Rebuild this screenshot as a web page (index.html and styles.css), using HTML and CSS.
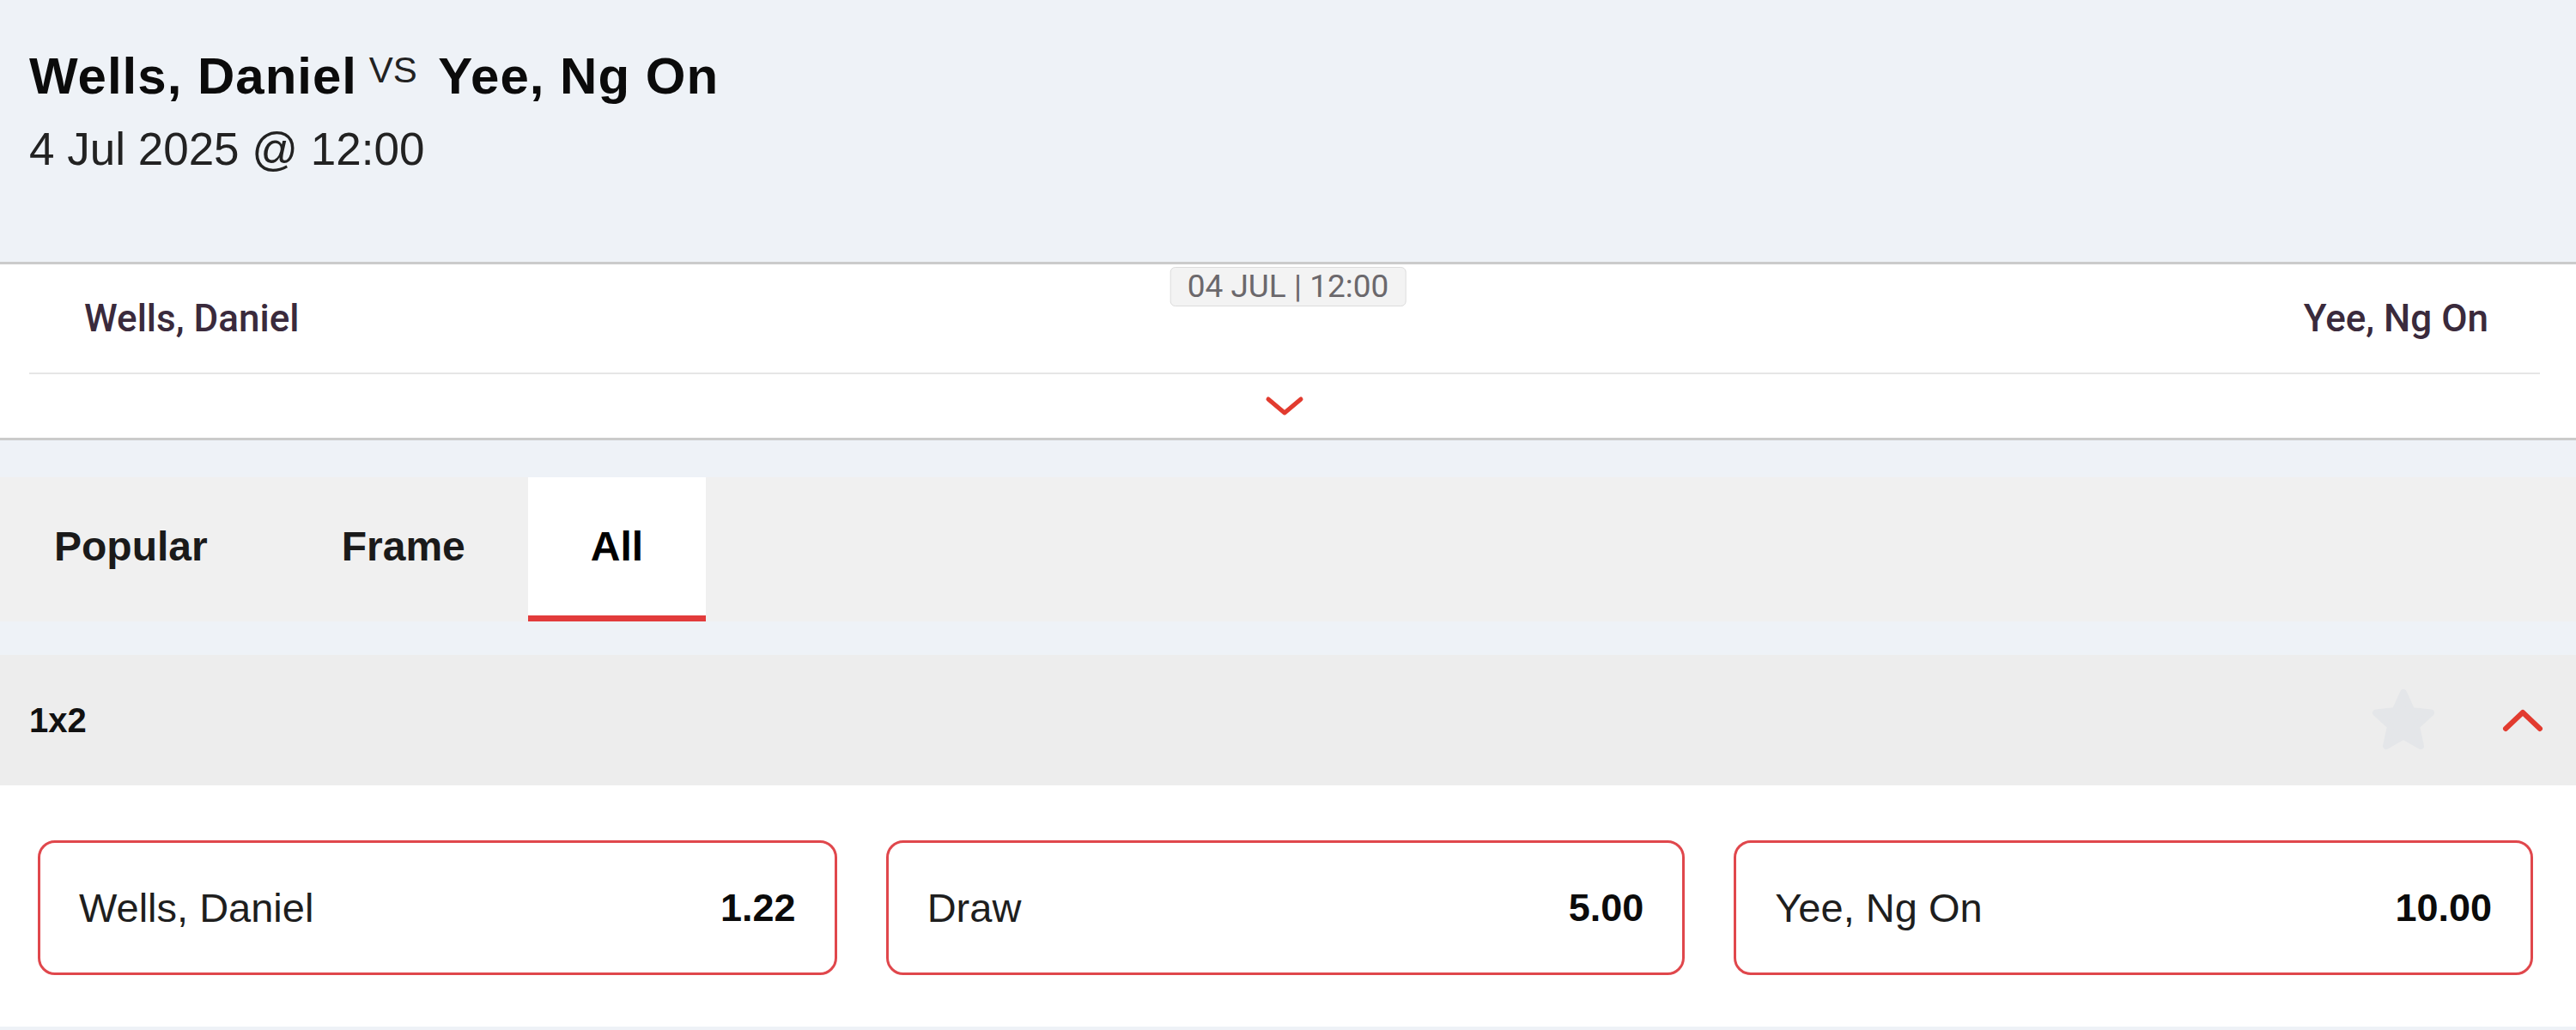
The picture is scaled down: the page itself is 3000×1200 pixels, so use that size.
FILE: index.html
```html
<!DOCTYPE html>
<html lang="en">
<head>
    <meta charset="UTF-8"/>
    <meta name="viewport" content="width=device-width, initial-scale=1.0"/>
    <title>Wells, Daniel vs Yee, Ng On</title>
    <link rel="stylesheet" href="styles.css">
</head>
<body>
    <header class="event-head">
        <h1 class="event-title">Wells, Daniel <span class="vs">VS</span> Yee, Ng On</h1>
        <div class="event-date">4 Jul 2025 @ 12:00</div>
    </header>

    <section class="scoreboard">
        <span class="start-badge">04 JUL | 12:00</span>
        <div class="teams">
            <span>Wells, Daniel</span>
            <span>Yee, Ng On</span>
        </div>
        <div class="expand">
            <svg width="46" height="24" viewBox="0 0 46 24"><path d="M4 4 L23 20 L42 4" fill="none" stroke="#e23b2f" stroke-width="5" stroke-linecap="round" stroke-linejoin="round"/></svg>
        </div>
    </section>

    <nav class="tabs">
        <a class="tab">Popular</a>
        <a class="tab">Frame</a>
        <a class="tab active">All</a>
    </nav>

    <section class="market">
        <div class="market-head">
            <span class="market-name">1x2</span>
            <div class="market-tools">
                <svg class="star" width="78" height="76" viewBox="0 0 78 76"><path d="M39 6 L48.5 27 L71 29.5 L54 45 L59 68 L39 56.5 L19 68 L24 45 L7 29.5 L29.5 27 Z" fill="#e4e6e9" stroke="#e4e6e9" stroke-width="8" stroke-linejoin="round"/></svg>
                <svg width="48" height="28" viewBox="0 0 48 28"><path d="M4 24 L24 5 L44 24" fill="none" stroke="#e23b2f" stroke-width="6" stroke-linecap="round" stroke-linejoin="round"/></svg>
            </div>
        </div>
        <div class="odds-row">
            <button class="odd"><span class="odd-label">Wells, Daniel</span><span class="odd-value">1.22</span></button>
            <button class="odd"><span class="odd-label">Draw</span><span class="odd-value">5.00</span></button>
            <button class="odd"><span class="odd-label">Yee, Ng On</span><span class="odd-value">10.00</span></button>
        </div>
    </section>
</body>
</html>
```

FILE: styles.css
```css
body {
    margin: 0;
    background: #eef2f7;
    font-family: "Liberation Sans", Arial, sans-serif;
    color: #111;
}

.event-head {
    height: 308px;
    box-sizing: border-box;
    padding: 52px 34px 0;
    border-bottom: 3px solid #cbcbcb;
}

.event-title {
    margin: 0;
    font-size: 60px;
    line-height: 60px;
    font-weight: bold;
    letter-spacing: 1px;
    color: #0b0b0b;
}

.event-title .vs {
    font-size: 42px;
    font-weight: normal;
    letter-spacing: 0;
    vertical-align: 13px;
    margin: 0 8px 0 -4px;
    color: #222;
}

.event-date {
    margin-top: 28px;
    font-size: 53px;
    line-height: 53px;
    color: #222;
}

.scoreboard {
    position: relative;
    background: #fff;
    padding: 0 42px 0 34px;
    border-bottom: 3px solid #cbcbcb;
}

.start-badge {
    position: absolute;
    top: 3px;
    left: 50%;
    transform: translateX(-50%);
    padding: 0 19px;
    height: 44px;
    line-height: 44px;
    background: #f3f3f3;
    border: 1px solid #dcdcdc;
    border-radius: 6px;
    font-family: Roboto, sans-serif;
    font-size: 37px;
    color: #6b686c;
}

.teams {
    height: 126px;
    display: flex;
    align-items: center;
    justify-content: space-between;
    padding: 0 60px 0 64px;
    border-bottom: 2px solid #e6e6e6;
    font-family: Roboto, sans-serif;
    font-weight: 500;
    font-size: 44px;
    color: #3a2a3c;
}

.expand {
    height: 74px;
    display: flex;
    align-items: center;
    justify-content: center;
}

.tabs {
    display: flex;
    margin-top: 43px;
    height: 168px;
    background: #f0f0f0;
}

.tab {
    display: flex;
    align-items: center;
    padding: 0 73px;
    font-size: 48px;
    font-weight: bold;
    color: #1a1a1a;
    border-bottom: 7px solid transparent;
}

.tab:first-child {
    padding: 0 83px 0 63px;
}

.tab.active {
    background: #fff;
    color: #000;
    border-bottom-color: #e23b3b;
}

.market {
    margin-top: 39px;
    background: #fff;
    border-bottom: 4px solid #eef2f7;
}

.market-head {
    height: 152px;
    display: flex;
    align-items: center;
    justify-content: space-between;
    padding: 0 38px 0 34px;
    background: #ededed;
}

.market-name {
    font-size: 40px;
    font-weight: bold;
}

.market-tools {
    display: flex;
    align-items: center;
    gap: 76px;
}

.odds-row {
    display: grid;
    grid-template-columns: repeat(3, 1fr);
    gap: 57px;
    padding: 64px 50px 60px 44px;
}

.odd {
    height: 157px;
    display: flex;
    align-items: center;
    justify-content: space-between;
    padding: 0 45px;
    background: #fff;
    border: 3px solid #e0474c;
    border-radius: 20px;
    font-family: "Liberation Sans", Arial, sans-serif;
    cursor: pointer;
}

.odd-label {
    font-size: 47px;
    color: #1e1e1e;
}

.odd-value {
    font-size: 45px;
    font-weight: bold;
    color: #0b0b0b;
}
```
